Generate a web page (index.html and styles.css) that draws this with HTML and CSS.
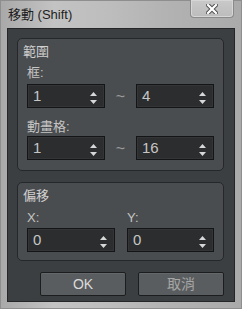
FILE: index.html
```html
<!DOCTYPE html>
<html>
<head>
  <meta charset="utf-8">
  <title>移動 (Shift)</title>

  <link rel="stylesheet" href="styles.css">

</head>

<body>

  <div class="window">

    <div class="titlebar">
      <span class="title">移動 (Shift)</span>
      <span class="close">
        <svg width="12" height="10" viewBox="0 0 12 10">
          <path d="M2 1 L10 9 M10 1 L2 9" stroke="#505050" stroke-width="4.2" stroke-linecap="square"/>
          <path d="M2 1 L10 9 M10 1 L2 9" stroke="#fff" stroke-width="2.2" stroke-linecap="square"/>
        </svg>
      </span>
    </div>

    <div class="client">

      <div class="group">
        <div class="group-title">範圍</div>

        <div class="label first">框:</div>
        <div class="row">
          <div class="spin w78"><span>1</span><svg class="arrows" width="7" height="14" viewBox="0 0 7 14"><polygon points="0,5 3.5,1 7,5" fill="#d8d8d8"/><polygon points="0,9 7,9 3.5,13" fill="#d8d8d8"/></svg></div>
          <div class="tilde">~</div>
          <div class="spin w78"><span>4</span><svg class="arrows" width="7" height="14" viewBox="0 0 7 14"><polygon points="0,5 3.5,1 7,5" fill="#d8d8d8"/><polygon points="0,9 7,9 3.5,13" fill="#d8d8d8"/></svg></div>
        </div>

        <div class="label second">動畫格:</div>
        <div class="row">
          <div class="spin w78"><span>1</span><svg class="arrows" width="7" height="14" viewBox="0 0 7 14"><polygon points="0,5 3.5,1 7,5" fill="#d8d8d8"/><polygon points="0,9 7,9 3.5,13" fill="#d8d8d8"/></svg></div>
          <div class="tilde">~</div>
          <div class="spin w78"><span>16</span><svg class="arrows" width="7" height="14" viewBox="0 0 7 14"><polygon points="0,5 3.5,1 7,5" fill="#d8d8d8"/><polygon points="0,9 7,9 3.5,13" fill="#d8d8d8"/></svg></div>
        </div>
      </div>

      <div class="group offset">
        <div class="group-title">偏移</div>

        <div class="cols">
          <div class="col">
            <div class="label xy">X:</div>
            <div class="spin w88"><span>0</span><svg class="arrows" width="7" height="14" viewBox="0 0 7 14"><polygon points="0,5 3.5,1 7,5" fill="#d8d8d8"/><polygon points="0,9 7,9 3.5,13" fill="#d8d8d8"/></svg></div>
          </div>
          <div class="col">
            <div class="label xy">Y:</div>
            <div class="spin w87"><span>0</span><svg class="arrows" width="7" height="14" viewBox="0 0 7 14"><polygon points="0,5 3.5,1 7,5" fill="#d8d8d8"/><polygon points="0,9 7,9 3.5,13" fill="#d8d8d8"/></svg></div>
          </div>
        </div>
      </div>

      <div class="buttons">
        <div class="btn ok">OK</div>
        <div class="btn cancel">取消</div>
      </div>

    </div>

  </div>

</body>
</html>
```

FILE: styles.css
```css
body {
  margin: 0px;
  font-family: 'Liberation Sans', 'Noto Sans CJK TC', sans-serif;
  background-color: #b4b4b4;
}
.window {
  width: 242px;
  height: 309px;
  box-sizing: border-box;
  border: 1px solid #8e8e8e;
  padding: 0px 6px 6px 6px;
  display: flex;
  flex-direction: column;
  background: linear-gradient(to right, #a9a9a9 0%, #c3c3c3 22%, #bdbdbd 45%, #b2b2b2 70%, #aaaaaa 100%);
}
.titlebar {
  height: 27px;
  display: flex;
  justify-content: space-between;
  align-items: flex-start;
}
.title {
  margin-left: 1px;
  margin-top: 6px;
  font-size: 13px;
  line-height: 16px;
  color: #1e1e1e;
}
.close {
  width: 44px;
  height: 18px;
  margin-top: -1px;
  margin-right: 1px;
  box-sizing: border-box;
  border: 1px solid #8a8a8a;
  border-top: none;
  border-radius: 0px 0px 4px 4px;
  background: linear-gradient(#c9c9c9, #bcbcbc);
  box-shadow: inset 0px 0px 0px 1px #d6d6d6;
  display: flex;
  justify-content: center;
  align-items: center;
}
.client {
  flex: 1;
  border: 1px solid #242628;
  background-color: #3c3f41;
  padding: 9px 10px 0px 9px;
  display: flex;
  flex-direction: column;
}
.group {
  border: 1px solid #25272a;
  border-radius: 5px;
  background-color: #4a4d4f;
  padding: 5px 9px 8px 5px;
}
.group.offset {
  margin-top: 11px;
}
.group-title {
  font-size: 13px;
  line-height: 16px;
  color: #d0d0d0;
}
.label {
  margin-left: 4px;
  font-size: 13px;
  line-height: 16px;
  color: #c4c4c4;
}
.label.first {
  margin-top: 5px;
  margin-bottom: 3px;
}
.label.second {
  margin-top: 9px;
  margin-bottom: 1px;
}
.label.xy {
  margin-left: 0px;
  margin-top: 6px;
  margin-bottom: 2px;
}
.row {
  margin-left: 4px;
  display: flex;
}
.cols {
  margin-left: 4px;
  display: flex;
  gap: 12px;
}
.spin {
  height: 24px;
  box-sizing: border-box;
  border: 1px solid #141516;
  background-color: #2b2d2f;
  box-shadow: inset 0px 0px 0px 1px #333537;
  padding: 0px 7px 0px 5px;
  display: flex;
  justify-content: space-between;
  align-items: center;
  font-size: 15px;
  color: #c6c6c6;
}
.spin span {
  line-height: 18px;
}
.arrows {
  margin-top: 4px;
}
.w78 {
  width: 78px;
}
.w88 {
  width: 88px;
}
.w87 {
  width: 87px;
}
.tilde {
  width: 31px;
  text-align: center;
  font-size: 16px;
  line-height: 26px;
  color: #9a9a9a;
}
.buttons {
  margin-top: 11px;
  display: flex;
  justify-content: flex-end;
  gap: 12px;
}
.btn {
  width: 86px;
  height: 24px;
  box-sizing: border-box;
  border: 1px solid #1c1d1e;
  border-radius: 2px;
  background-color: #5a5d5f;
  box-shadow: inset 0px 1px 0px #65686a;
  text-align: center;
  font-size: 14px;
  line-height: 22px;
}
.ok {
  color: #dadada;
}
.cancel {
  color: #a6a6a6;
}
```
